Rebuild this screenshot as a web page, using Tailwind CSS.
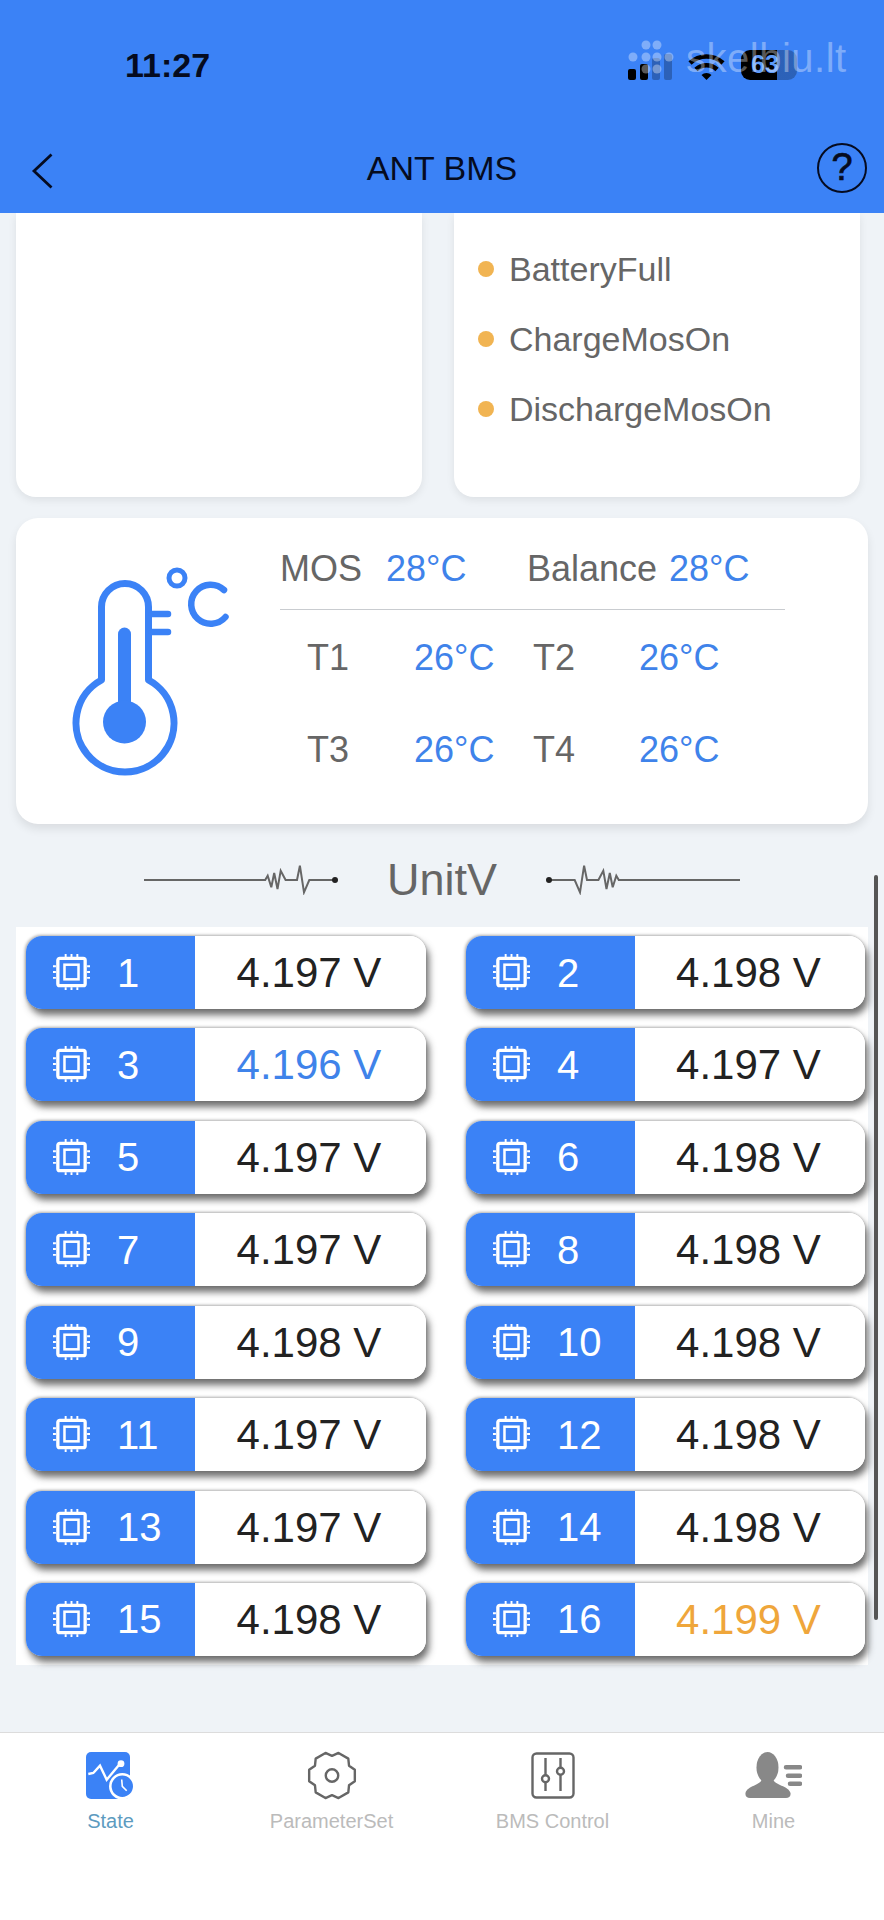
<!DOCTYPE html>
<html lang="en">
<head>
  <meta charset="UTF-8" />
  <meta name="viewport" content="width=device-width, initial-scale=1.0" />
  <title>ANT BMS</title>
  <script src="https://cdn.jsdelivr.net/npm/@tailwindcss/browser@4"></script>
</head>
<body class="relative w-[884px] h-[1920px] overflow-hidden bg-white font-['Liberation_Sans',Arial,sans-serif]">

  <!-- chip icon used by every cell -->
  <svg class="hidden">
    <symbol id="chip" viewBox="0 0 40 40">
      <rect x="6" y="5.500" width="28" height="28" rx="2" fill="none" stroke="#fff" stroke-width="3.400"/>
      <rect x="12.800" y="12" width="14.400" height="15" fill="none" stroke="#fff" stroke-width="2.600"/>
      <path d="M14 1V4M20 1V4M26 1V4M14 35V38M20 35V38M26 35V38M1 13.500H4M1 19.500H4M1 25.500H4M36 13.500H39M36 19.500H39M36 25.500H39" stroke="#fff" stroke-width="2"/>
    </symbol>
  </svg>

  <!-- Header -->
  <header class="h-[213px] bg-[#3b82f6] flex flex-col">
    <div class="h-[130px] shrink-0 flex items-center pl-[125px] pr-[87px] justify-between">
      <span class="text-[34px] font-bold text-[#050b20]">11:27</span>
      <div class="flex items-end gap-[16px]">
        <svg width="44" height="26" viewBox="0 0 44 26">
          <rect x="0" y="15" width="8" height="11" rx="2" fill="#000"/>
          <rect x="12" y="10" width="8" height="16" rx="2" fill="#000"/>
          <rect x="24" y="4" width="8" height="22" rx="2" fill="#000" fill-opacity="0.25"/>
          <rect x="36" y="0" width="8" height="26" rx="2" fill="#000" fill-opacity="0.25"/>
        </svg>
        <svg width="37" height="27" viewBox="0 0 37 27">
          <path d="M2 10A24 24 0 0 1 35 10M8 16.500A15 15 0 0 1 29 16.500" fill="none" stroke="#000" stroke-width="4.600"/>
          <path d="M13.500 22L18.500 27L23.500 22A7 7 0 0 0 13.500 22Z" fill="#000"/>
        </svg>
        <div class="w-[56px] h-[30px] rounded-[9px] bg-[linear-gradient(90deg,#000_64%,rgba(0,0,0,0.25)_64%)] flex items-center pl-[10px] text-[25px] font-bold text-[#5f9bf8]">63</div>
      </div>
    </div>
    <div class="mt-[11px] h-[50px] grid grid-cols-[1fr_auto_1fr] items-center px-[17px]">
      <svg class="ml-[14px] mt-[6px]" width="22" height="36" viewBox="0 0 22 36" fill="none">
        <path d="M20.500 1.500L3 18L20.500 34.500" stroke="#050b20" stroke-width="2.800"/>
      </svg>
      <span class="text-[34px] text-[#050b20] mt-[2px]">ANT BMS</span>
      <div class="justify-self-end w-[50px] h-[50px] rounded-full border-[2.5px] border-[#050b20] flex items-center justify-center text-[38px] [-webkit-text-stroke:0.7px_#050b20] text-[#050b20]">?</div>
    </div>
  </header>

  <!-- Scrolled content -->
  <main class="relative h-[1519px] overflow-hidden bg-[#eff3f7] px-[16px]">
    <div class="grid grid-cols-[406px_406px] gap-x-[32px]">
      <div class="h-[284px] bg-white rounded-b-[20px] shadow-[0_3px_8px_rgba(0,0,0,0.08)]"></div>
      <div class="h-[284px] bg-white rounded-b-[20px] shadow-[0_3px_8px_rgba(0,0,0,0.08)] pl-[24px] pt-[36px] flex flex-col gap-[30px]">
        <div class="flex items-center h-[40px] gap-[15px] text-[34px] text-[#666]"><span class="w-[16px] h-[16px] rounded-full bg-[#f1b452]"></span>BatteryFull</div>
        <div class="flex items-center h-[40px] gap-[15px] text-[34px] text-[#666]"><span class="w-[16px] h-[16px] rounded-full bg-[#f1b452]"></span>ChargeMosOn</div>
        <div class="flex items-center h-[40px] gap-[15px] text-[34px] text-[#666]"><span class="w-[16px] h-[16px] rounded-full bg-[#f1b452]"></span>DischargeMosOn</div>
      </div>
    </div>

    <!-- Temperatures -->
    <section class="mt-[21px] w-[852px] h-[306px] bg-white rounded-[22px] shadow-[0_5px_10px_rgba(0,0,0,0.09)] flex pl-[24px] pt-[32px]">
      <svg class="shrink-0" width="200" height="240" viewBox="0 0 200 240" fill="none" stroke="#3b82f6" stroke-linecap="round">
        <path d="M61.500 130V57a23.500 23.500 0 0 1 47 0V130A49 49 0 1 1 61.500 130Z" stroke-width="7" stroke-linejoin="round"/>
        <path d="M84.500 84V170" stroke-width="13"/>
        <circle cx="84.500" cy="172" r="21.500" fill="#3b82f6" stroke="none"/>
        <path d="M112 64H128M112 82H128" stroke-width="6.500"/>
        <circle cx="137" cy="28" r="8" stroke-width="5"/>
        <path d="M184 40A19.500 19.500 0 1 0 185.500 67" stroke-width="6.500"/>
      </svg>
      <div class="ml-[40px] w-[505px] text-[36px] leading-[40px] text-[#666]">
        <div class="mt-[-1px] pb-[20px] border-b border-[#c9ccd0] grid grid-cols-[106px_141px_142px_auto]">
          <span>MOS</span><span class="text-[#3f83ea]">28°C</span><span>Balance</span><span class="text-[#3f83ea]">28°C</span>
        </div>
        <div class="mt-[28px] grid grid-cols-[134px_119px_106px_auto] gap-y-[52px]">
          <span class="pl-[27px]">T1</span><span class="text-[#3f83ea]">26°C</span><span>T2</span><span class="text-[#3f83ea]">26°C</span>
          <span class="pl-[27px]">T3</span><span class="text-[#3f83ea]">26°C</span><span>T4</span><span class="text-[#3f83ea]">26°C</span>
        </div>
      </div>
    </section>

    <!-- UnitV title -->
    <div class="w-[852px] h-[103px] pt-[9px] flex items-center justify-center gap-[49px]">
      <svg width="194" height="30" viewBox="0 0 194 30" fill="none">
        <path d="M0 15H121.200L123.700 10.700L127.300 22.300L130.200 8L133.500 24L136.700 5.700L141.600 15H153L155.900 0.700L160 27.300L165.300 15H192" stroke="#666" stroke-width="2"/>
        <circle cx="191" cy="15" r="3" fill="#222"/>
      </svg>
      <span class="text-[45px] text-[#666]">UnitV</span>
      <svg class="-scale-x-100" width="194" height="30" viewBox="0 0 194 30" fill="none">
        <path d="M0 15H121.200L123.700 10.700L127.300 22.300L130.200 8L133.500 24L136.700 5.700L141.600 15H153L155.900 0.700L160 27.300L165.300 15H192" stroke="#666" stroke-width="2"/>
        <circle cx="191" cy="15" r="3" fill="#222"/>
      </svg>
    </div>

    <!-- Cell voltages -->
    <div class="w-[852px] h-[738px] bg-white pl-[10px] pt-[9px] grid grid-cols-[400px_399px] content-start gap-x-[40px] gap-y-[19.43px]">
      <div class="h-[73px] flex rounded-[16px] overflow-hidden shadow-[3px_6px_7px_rgba(50,50,50,0.7),-1px_-1px_3px_rgba(0,0,0,0.3)] text-[42px]">
        <div class="w-[169px] bg-[#3b82f6] flex items-center pl-[26px] gap-[26px] text-white text-[40px]"><svg class="w-[39px] h-[39px]"><use href="#chip"/></svg>1</div>
        <div class="flex-1 bg-white flex items-center justify-center pr-[3px] text-[#222]">4.197 V</div>
      </div>
      <div class="h-[73px] flex rounded-[16px] overflow-hidden shadow-[3px_6px_7px_rgba(50,50,50,0.7),-1px_-1px_3px_rgba(0,0,0,0.3)] text-[42px]">
        <div class="w-[169px] bg-[#3b82f6] flex items-center pl-[26px] gap-[26px] text-white text-[40px]"><svg class="w-[39px] h-[39px]"><use href="#chip"/></svg>2</div>
        <div class="flex-1 bg-white flex items-center justify-center pr-[3px] text-[#222]">4.198 V</div>
      </div>
      <div class="h-[73px] flex rounded-[16px] overflow-hidden shadow-[3px_6px_7px_rgba(50,50,50,0.7),-1px_-1px_3px_rgba(0,0,0,0.3)] text-[42px]">
        <div class="w-[169px] bg-[#3b82f6] flex items-center pl-[26px] gap-[26px] text-white text-[40px]"><svg class="w-[39px] h-[39px]"><use href="#chip"/></svg>3</div>
        <div class="flex-1 bg-white flex items-center justify-center pr-[3px] text-[#3f83ea]">4.196 V</div>
      </div>
      <div class="h-[73px] flex rounded-[16px] overflow-hidden shadow-[3px_6px_7px_rgba(50,50,50,0.7),-1px_-1px_3px_rgba(0,0,0,0.3)] text-[42px]">
        <div class="w-[169px] bg-[#3b82f6] flex items-center pl-[26px] gap-[26px] text-white text-[40px]"><svg class="w-[39px] h-[39px]"><use href="#chip"/></svg>4</div>
        <div class="flex-1 bg-white flex items-center justify-center pr-[3px] text-[#222]">4.197 V</div>
      </div>
      <div class="h-[73px] flex rounded-[16px] overflow-hidden shadow-[3px_6px_7px_rgba(50,50,50,0.7),-1px_-1px_3px_rgba(0,0,0,0.3)] text-[42px]">
        <div class="w-[169px] bg-[#3b82f6] flex items-center pl-[26px] gap-[26px] text-white text-[40px]"><svg class="w-[39px] h-[39px]"><use href="#chip"/></svg>5</div>
        <div class="flex-1 bg-white flex items-center justify-center pr-[3px] text-[#222]">4.197 V</div>
      </div>
      <div class="h-[73px] flex rounded-[16px] overflow-hidden shadow-[3px_6px_7px_rgba(50,50,50,0.7),-1px_-1px_3px_rgba(0,0,0,0.3)] text-[42px]">
        <div class="w-[169px] bg-[#3b82f6] flex items-center pl-[26px] gap-[26px] text-white text-[40px]"><svg class="w-[39px] h-[39px]"><use href="#chip"/></svg>6</div>
        <div class="flex-1 bg-white flex items-center justify-center pr-[3px] text-[#222]">4.198 V</div>
      </div>
      <div class="h-[73px] flex rounded-[16px] overflow-hidden shadow-[3px_6px_7px_rgba(50,50,50,0.7),-1px_-1px_3px_rgba(0,0,0,0.3)] text-[42px]">
        <div class="w-[169px] bg-[#3b82f6] flex items-center pl-[26px] gap-[26px] text-white text-[40px]"><svg class="w-[39px] h-[39px]"><use href="#chip"/></svg>7</div>
        <div class="flex-1 bg-white flex items-center justify-center pr-[3px] text-[#222]">4.197 V</div>
      </div>
      <div class="h-[73px] flex rounded-[16px] overflow-hidden shadow-[3px_6px_7px_rgba(50,50,50,0.7),-1px_-1px_3px_rgba(0,0,0,0.3)] text-[42px]">
        <div class="w-[169px] bg-[#3b82f6] flex items-center pl-[26px] gap-[26px] text-white text-[40px]"><svg class="w-[39px] h-[39px]"><use href="#chip"/></svg>8</div>
        <div class="flex-1 bg-white flex items-center justify-center pr-[3px] text-[#222]">4.198 V</div>
      </div>
      <div class="h-[73px] flex rounded-[16px] overflow-hidden shadow-[3px_6px_7px_rgba(50,50,50,0.7),-1px_-1px_3px_rgba(0,0,0,0.3)] text-[42px]">
        <div class="w-[169px] bg-[#3b82f6] flex items-center pl-[26px] gap-[26px] text-white text-[40px]"><svg class="w-[39px] h-[39px]"><use href="#chip"/></svg>9</div>
        <div class="flex-1 bg-white flex items-center justify-center pr-[3px] text-[#222]">4.198 V</div>
      </div>
      <div class="h-[73px] flex rounded-[16px] overflow-hidden shadow-[3px_6px_7px_rgba(50,50,50,0.7),-1px_-1px_3px_rgba(0,0,0,0.3)] text-[42px]">
        <div class="w-[169px] bg-[#3b82f6] flex items-center pl-[26px] gap-[26px] text-white text-[40px]"><svg class="w-[39px] h-[39px]"><use href="#chip"/></svg>10</div>
        <div class="flex-1 bg-white flex items-center justify-center pr-[3px] text-[#222]">4.198 V</div>
      </div>
      <div class="h-[73px] flex rounded-[16px] overflow-hidden shadow-[3px_6px_7px_rgba(50,50,50,0.7),-1px_-1px_3px_rgba(0,0,0,0.3)] text-[42px]">
        <div class="w-[169px] bg-[#3b82f6] flex items-center pl-[26px] gap-[26px] text-white text-[40px]"><svg class="w-[39px] h-[39px]"><use href="#chip"/></svg>11</div>
        <div class="flex-1 bg-white flex items-center justify-center pr-[3px] text-[#222]">4.197 V</div>
      </div>
      <div class="h-[73px] flex rounded-[16px] overflow-hidden shadow-[3px_6px_7px_rgba(50,50,50,0.7),-1px_-1px_3px_rgba(0,0,0,0.3)] text-[42px]">
        <div class="w-[169px] bg-[#3b82f6] flex items-center pl-[26px] gap-[26px] text-white text-[40px]"><svg class="w-[39px] h-[39px]"><use href="#chip"/></svg>12</div>
        <div class="flex-1 bg-white flex items-center justify-center pr-[3px] text-[#222]">4.198 V</div>
      </div>
      <div class="h-[73px] flex rounded-[16px] overflow-hidden shadow-[3px_6px_7px_rgba(50,50,50,0.7),-1px_-1px_3px_rgba(0,0,0,0.3)] text-[42px]">
        <div class="w-[169px] bg-[#3b82f6] flex items-center pl-[26px] gap-[26px] text-white text-[40px]"><svg class="w-[39px] h-[39px]"><use href="#chip"/></svg>13</div>
        <div class="flex-1 bg-white flex items-center justify-center pr-[3px] text-[#222]">4.197 V</div>
      </div>
      <div class="h-[73px] flex rounded-[16px] overflow-hidden shadow-[3px_6px_7px_rgba(50,50,50,0.7),-1px_-1px_3px_rgba(0,0,0,0.3)] text-[42px]">
        <div class="w-[169px] bg-[#3b82f6] flex items-center pl-[26px] gap-[26px] text-white text-[40px]"><svg class="w-[39px] h-[39px]"><use href="#chip"/></svg>14</div>
        <div class="flex-1 bg-white flex items-center justify-center pr-[3px] text-[#222]">4.198 V</div>
      </div>
      <div class="h-[73px] flex rounded-[16px] overflow-hidden shadow-[3px_6px_7px_rgba(50,50,50,0.7),-1px_-1px_3px_rgba(0,0,0,0.3)] text-[42px]">
        <div class="w-[169px] bg-[#3b82f6] flex items-center pl-[26px] gap-[26px] text-white text-[40px]"><svg class="w-[39px] h-[39px]"><use href="#chip"/></svg>15</div>
        <div class="flex-1 bg-white flex items-center justify-center pr-[3px] text-[#222]">4.198 V</div>
      </div>
      <div class="h-[73px] flex rounded-[16px] overflow-hidden shadow-[3px_6px_7px_rgba(50,50,50,0.7),-1px_-1px_3px_rgba(0,0,0,0.3)] text-[42px]">
        <div class="w-[169px] bg-[#3b82f6] flex items-center pl-[26px] gap-[26px] text-white text-[40px]"><svg class="w-[39px] h-[39px]"><use href="#chip"/></svg>16</div>
        <div class="flex-1 bg-white flex items-center justify-center pr-[3px] text-[#efa63b]">4.199 V</div>
      </div>
    </div>

    <!-- scrollbar -->
    <div class="absolute left-[874px] top-[662px] w-[4px] h-[745px] rounded-full bg-[#555]"></div>
  </main>

  <!-- Tab bar -->
  <nav class="h-[188px] bg-white border-t border-[#dcdcdc] grid grid-cols-4 pt-[19px] text-[20px] leading-[24px] text-center text-[#bbb]">
    <div class="flex flex-col items-center gap-[10px] text-[#5d9bbf]">
      <svg width="49" height="47" viewBox="0 0 49 47" fill="none">
        <rect width="44" height="47" rx="5" fill="#3b82f6"/>
        <path d="M2.300 22L7.300 21L14 13.700L20.700 27.700L34 11.700" stroke="#fff" stroke-width="2.400"/>
        <circle cx="35" cy="11.700" r="3.400" fill="#fff"/>
        <circle cx="36.300" cy="34.300" r="12" fill="#3b82f6" stroke="#fff" stroke-width="2.600"/>
        <path d="M35.700 27.500L36.300 34.300L40.700 38.700" stroke="#fff" stroke-width="1.600"/>
      </svg>
      State
    </div>
    <div class="flex flex-col items-center gap-[10px]">
      <svg class="overflow-visible" width="50" height="47" viewBox="0 0 50 49" fill="none" stroke="#666" stroke-width="2.500" stroke-linejoin="round">
        <path d="M25 4L31.800 0.950L42 6.900L42.750 14.250L48.800 18.600V30.400L42.750 34.750L42 42.100L31.800 48.050L25 45L18.200 48.050L8 42.100L7.250 34.750L1.200 30.400V18.600L7.250 14.250L8 6.900L18.200 0.950Z"/>
        <circle cx="25" cy="24.500" r="6.500"/>
      </svg>
      ParameterSet
    </div>
    <div class="flex flex-col items-center gap-[10px]">
      <svg width="44" height="47" viewBox="0 0 44 47" fill="none" stroke="#666" stroke-width="2.400">
        <rect x="1.500" y="1.500" width="41" height="44" rx="4"/>
        <path d="M14.500 6V23M14.500 30.500V39M29.500 6V15.500M29.500 23V39"/>
        <circle cx="14.500" cy="26.700" r="3.500"/>
        <circle cx="29.500" cy="19.300" r="3.500"/>
      </svg>
      BMS Control
    </div>
    <div class="flex flex-col items-center gap-[10px]">
      <svg width="57" height="47" viewBox="0 0 57 47" fill="#888">
        <ellipse cx="22.500" cy="15.500" rx="11" ry="15.500"/>
        <path d="M17 27C16 33 2 34 0.500 41C0 44 2 46 5 46H41C44 46 46 44 45.500 41C44 34 29 33 28 27Z"/>
        <path d="M41 15.300H55M43 23.700H55M45 31.700H55" stroke="#888" stroke-width="4.500" stroke-linecap="round"/>
      </svg>
      Mine
    </div>
  </nav>

  <!-- skelbiu.lt watermark over the status bar -->
  <div class="absolute left-[626px] top-[28px] flex items-center gap-[12px] text-white/35 text-[40px] tracking-[0.5px]">
    <svg width="48" height="42" viewBox="0 0 48 42" fill="#fff" fill-opacity="0.35">
      <circle cx="20" cy="8" r="4.500"/><circle cx="31" cy="8" r="4.500"/>
      <circle cx="7" cy="20" r="4.500"/><circle cx="20" cy="20" r="4.500"/><circle cx="31" cy="20" r="4.500"/><circle cx="43" cy="20" r="4.500"/>
      <circle cx="20" cy="32" r="4.500"/><circle cx="31" cy="32" r="4.500"/>
    </svg>
    skelbiu.lt
  </div>
</body>
</html>
